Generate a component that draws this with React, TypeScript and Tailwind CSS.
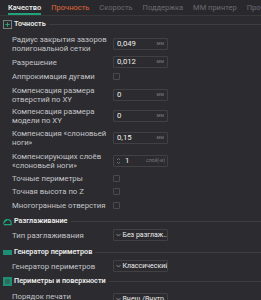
import type { ReactNode } from 'react'

const tabs = [
  { name: 'Качество', cls: 'text-[#e8e8e8] font-semibold' },
  { name: 'Прочность', cls: 'text-[#e0663a]' },
  { name: 'Скорость', cls: 'text-[#6c6c70]' },
  { name: 'Поддержка', cls: 'text-[#6c6c70]' },
  { name: 'MM принтер', cls: 'text-[#6c6c70]' },
  { name: 'Прочее', cls: 'text-[#6c6c70]' },
]

function SectionHeader({ icon, title, h = 'h-[14px]' }: { icon: ReactNode; title: string; h?: string }) {
  return (
    <div className={`flex items-center ${h} pl-[3px]`}>
      <div className="w-[9px] h-[9px] flex items-center justify-center shrink-0">{icon}</div>
      <span className="ml-[2px] text-[7.25px] font-semibold text-[#ececec] whitespace-nowrap">{title}</span>
      <div className="flex-1 ml-[3px] h-px bg-[#3d3d42]" />
    </div>
  )
}

function Row({ label, children, h }: { label: ReactNode; children?: ReactNode; h: string }) {
  return (
    <div className={`flex items-center ${h} pl-[12px]`}>
      <div className="w-[101px] text-[7.75px] leading-[9px] text-[#c4c4c8] whitespace-nowrap">{label}</div>
      {children}
    </div>
  )
}

function NumInput({ value, unit = 'мм' }: { value: string; unit?: string }) {
  return (
    <div className="w-[55px] h-[12px] border border-[#404045] rounded-[1px] flex items-center justify-between px-[3px]">
      <span className="text-[7.75px] text-[#ececec]">{value}</span>
      <span className="text-[5px] text-[#7a7a7e]">{unit}</span>
    </div>
  )
}

function Check() {
  return <div className="w-[7px] h-[7px] border border-[#4a4a4f] rounded-[1px]" />
}

function Select({ value, className = '' }: { value: string; className?: string }) {
  return (
    <div className={`w-[55px] h-[12px] border border-[#404045] rounded-[1px] flex items-center pl-[2px] overflow-hidden ${className}`}>
      <svg width="5" height="4" viewBox="0 0 5 4" className="shrink-0">
        <path d="M0.5 1 L2.5 3 L4.5 1" stroke="#9a9a9e" strokeWidth="0.8" fill="none" />
      </svg>
      <span className="ml-[1.5px] text-[7px] text-[#ececec] whitespace-nowrap">{value}</span>
    </div>
  )
}

export default function App() {
  return (
    <div className="w-[261px] h-[300px] overflow-hidden bg-[#2c2c30] font-['Roboto',sans-serif]">
      {/* Tabs */}
      <div className="h-[16px] flex items-start pl-[8px] gap-[10px] bg-[#29292d] border-b border-[#38383c] whitespace-nowrap overflow-hidden">
        {tabs.map((t, i) => (
          <div key={t.name} className="relative h-[15px] flex items-center shrink-0">
            <span className={`text-[7.5px] ${t.cls}`}>{t.name}</span>
            {i === 0 && <div className="absolute left-0 right-0 bottom-0 h-[2px] bg-[#1fa37a]" />}
          </div>
        ))}
      </div>

      <SectionHeader
        h="h-[16px]"
        title="Точность"
        icon={
          <svg width="9" height="9" viewBox="0 0 10 10">
            <rect x="0.5" y="0.5" width="9" height="9" fill="none" stroke="#7d8c85" strokeWidth="1" />
            <path d="M5 2.5 V7.5 M2.5 5 H7.5" stroke="#2aa87a" strokeWidth="1" />
          </svg>
        }
      />
      <Row label={<>Радиус закрытия зазоров<br />полигональной сетки</>} h="h-[24px]">
        <NumInput value="0,049" />
      </Row>
      <Row label="Разрешение" h="h-[12px]">
        <NumInput value="0,012" />
      </Row>
      <Row label="Аппрокимация дугами" h="h-[16px]">
        <Check />
      </Row>
      <Row label={<>Компенсация размера<br />отверстий по XY</>} h="h-[21px]">
        <NumInput value="0" />
      </Row>
      <Row label={<>Компенсация размера<br />модели по XY</>} h="h-[21px]">
        <NumInput value="0" />
      </Row>
      <Row label={<>Компенсация «слоновьей<br />ноги»</>} h="h-[24px]">
        <NumInput value="0,15" />
      </Row>
      <Row label={<>Компенсирующих слоёв<br />«слоновьей ноги»</>} h="h-[21px]">
        <div className="w-[55px] h-[12px] border border-[#404045] rounded-[1px] flex items-center px-[2px]">
          <svg width="5" height="8" viewBox="0 0 5 8" className="shrink-0">
            <path d="M1 3 L2.5 1.5 L4 3 M1 5 L2.5 6.5 L4 5" stroke="#8a8a8e" strokeWidth="0.7" fill="none" />
          </svg>
          <span className="ml-[4px] text-[7.75px] text-[#ececec]">1</span>
          <span className="ml-auto text-[5px] text-[#7a7a7e]">слой(-и)</span>
        </div>
      </Row>
      <Row label="Точные периметры" h="h-[14px]">
        <Check />
      </Row>
      <Row label="Точная высота по Z" h="h-[13px]">
        <Check />
      </Row>
      <Row label="Многогранные отверстия" h="h-[14px]">
        <Check />
      </Row>

      <div className="h-[2px]" />
      <SectionHeader
        title="Разглаживание"
        icon={
          <svg width="9" height="9" viewBox="0 0 10 10">
            <path d="M1 8.5 H9 V6.5 C9 4 7 3 5 3 H3.5 M4.5 3 C3 3 1.5 4.5 1 6.5 Z" fill="none" stroke="#1fa37a" strokeWidth="1.3" />
          </svg>
        }
      />
      <Row label="Тип разглаживания" h="h-[14px]">
        <Select value="Без разглаж..." />
      </Row>
      <div className="h-[3px]" />
      <SectionHeader
        title="Генератор периметров"
        icon={<div className="w-[9px] h-[5px] bg-[#1e8f74]" />}
      />
      <Row label="Генератор периметров" h="h-[14px]">
        <Select value="Классический" />
      </Row>
      <div className="h-[1px]" />
      <SectionHeader
        title="Периметры и поверхности"
        icon={
          <svg width="9" height="9" viewBox="0 0 10 10">
            <rect x="0" y="0" width="10" height="10" fill="#1e8f74" />
            <rect x="2.5" y="2.5" width="5" height="5" fill="#2c6b5a" />
          </svg>
        }
      />
      <Row label="Порядок печати" h="h-[16px]">
        <Select value="Внеш./Внутр." className="mt-[6px]" />
      </Row>
    </div>
  )
}
